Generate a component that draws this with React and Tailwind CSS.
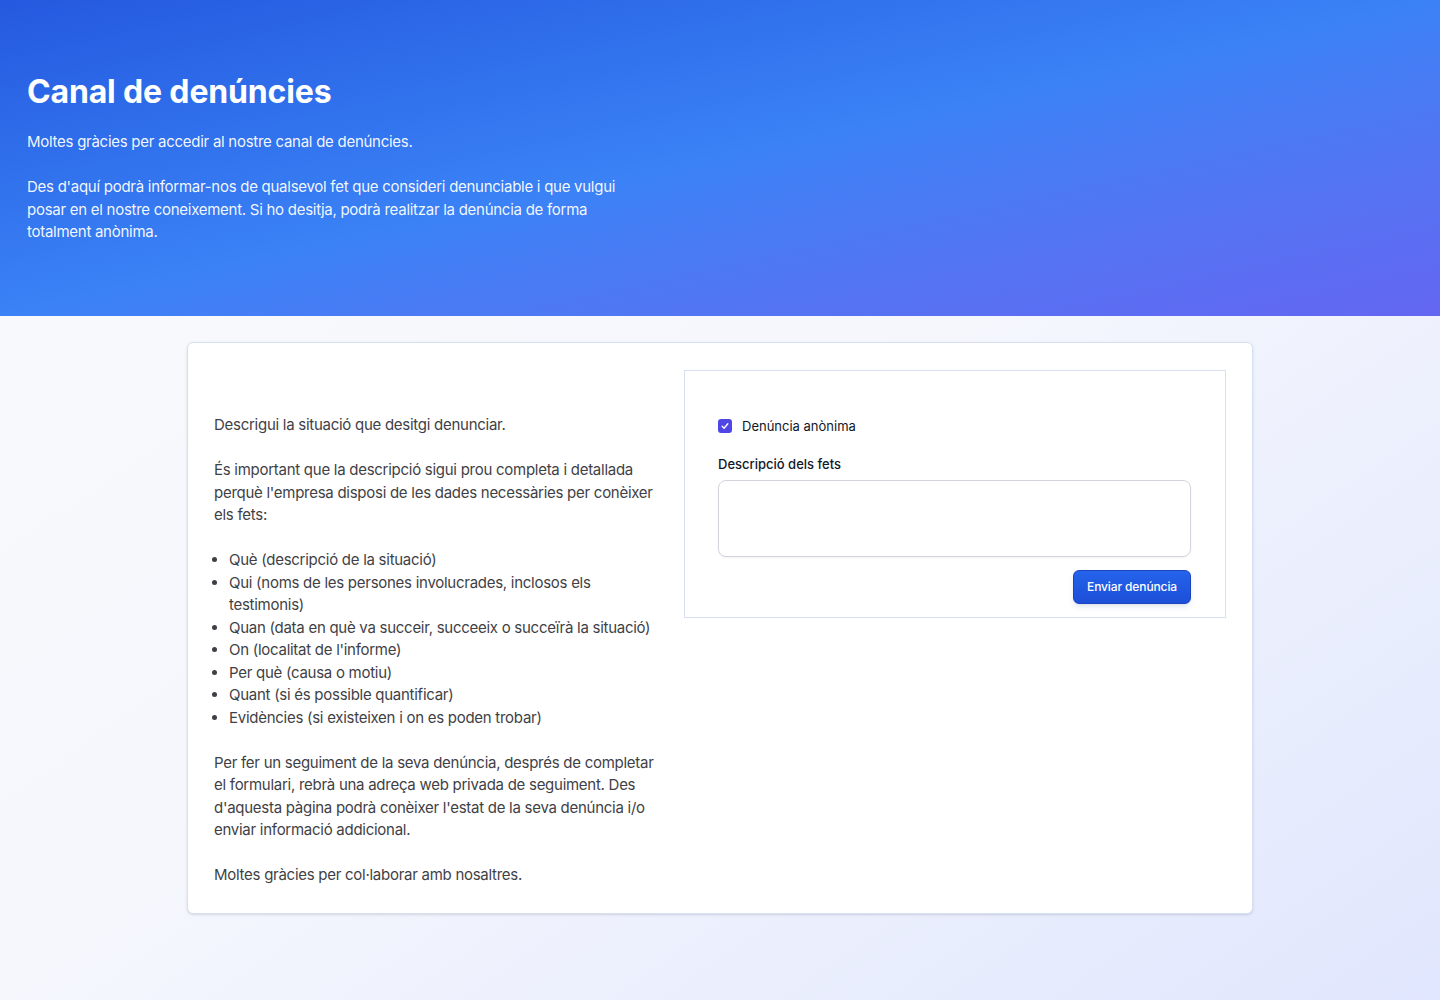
import { useState } from 'react';

const font = { fontFamily: 'Inter, "Noto Sans", "Liberation Sans", sans-serif' };

const items = [
  'Què (descripció de la situació)',
  'Qui (noms de les persones involucrades, inclosos els testimonis)',
  'Quan (data en què va succeir, succeeix o succeïrà la situació)',
  "On (localitat de l'informe)",
  'Per què (causa o motiu)',
  'Quant (si és possible quantificar)',
  'Evidències (si existeixen i on es poden trobar)',
];

function Checkbox({ checked, onChange }) {
  return (
    <button
      type="button"
      onClick={() => onChange(!checked)}
      className={`flex h-[14px] w-[14px] items-center justify-center rounded-[3px] ${
        checked ? 'bg-[#4f46e5]' : 'border border-gray-300 bg-white'
      }`}
    >
      {checked && (
        <svg viewBox="0 0 16 16" className="h-[10px] w-[10px]" fill="none">
          <path d="M3.5 8.5l3 3 6-7" stroke="white" strokeWidth="2.2" strokeLinecap="round" strokeLinejoin="round" />
        </svg>
      )}
    </button>
  );
}

export default function App() {
  const [anonymous, setAnonymous] = useState(true);
  const [text, setText] = useState('');

  return (
    <div style={font} className="min-h-[1000px] bg-gradient-to-br from-[#f8fafc] via-[#f5f7fd] to-[#e0e6fd]">
      {/* Header */}
      <header className="h-[316px] bg-gradient-to-br from-[#2559df] via-[#3b82f6] to-[#6366f1] px-[27px] pt-[72px] text-white">
        <h1 className="text-[32px] font-bold leading-10 tracking-[-0.005em]">Canal de denúncies</h1>
        <div className="mt-[19px] max-w-[600px] text-[15px] leading-[22.5px] tracking-[-0.018em] text-white/95">
          <p>Moltes gràcies per accedir al nostre canal de denúncies.</p>
          <p className="mt-[22.5px]">
            Des d'aquí podrà informar-nos de qualsevol fet que consideri denunciable i que vulgui posar en el
            nostre coneixement. Si ho desitja, podrà realitzar la denúncia de forma totalment anònima.
          </p>
        </div>
      </header>

      {/* Content */}
      <main className="flex justify-center pt-[26px] pb-[87px]">
        <div className="w-[1066px] rounded-md border border-[#d6e0f0] bg-white px-[26px] pt-[27px] pb-[26px] shadow-sm">
          <div className="grid grid-cols-[442px_1fr] gap-[28px]">
            <div className="pt-[44px] text-[15px] leading-[22.5px] tracking-[-0.018em] text-[#3f3f46]">
              <p>Descrigui la situació que desitgi denunciar.</p>
              <p className="mt-[22.5px]">
                És important que la descripció sigui prou completa i detallada perquè l'empresa disposi de les
                dades necessàries per conèixer els fets:
              </p>
              <ul className="mt-[22.5px] list-disc pl-[15px]">
                {items.map((item) => (
                  <li key={item}>{item}</li>
                ))}
              </ul>
              <p className="mt-[22.5px]">
                Per fer un seguiment de la seva denúncia, després de completar el formulari, rebrà una adreça web
                privada de seguiment. Des d'aquesta pàgina podrà conèixer l'estat de la seva denúncia i/o enviar
                informació addicional.
              </p>
              <p className="mt-[22.5px]">Moltes gràcies per col·laborar amb nosaltres.</p>
            </div>

            <div className="self-start border border-[#d6e0f0] bg-white pl-[33px] pr-[34px] pt-[47px] pb-[13px]">
              <label className="flex items-center gap-[10px] text-[13px] leading-4 text-gray-900">
                <Checkbox checked={anonymous} onChange={setAnonymous} />
                Denúncia anònima
              </label>

              <label className="mt-[22px] block text-[13px] font-medium leading-4 text-gray-900">
                Descripció dels fets
              </label>
              <textarea
                value={text}
                onChange={(e) => setText(e.target.value)}
                className="mt-[8px] block h-[77px] w-full resize-none rounded-lg border border-[#d1d5db] px-3 py-2 text-sm text-gray-900 shadow-xs outline-none focus:border-blue-500"
              />

              <div className="mt-[13px] flex justify-end">
                <button
                  type="button"
                  className="h-[34px] rounded-md border border-[#1d44c0] bg-gradient-to-b from-[#2563eb] to-[#1d4ed8] px-[13px] text-[12px] font-medium tracking-[-0.01em] text-white shadow-md shadow-blue-900/10"
                >
                  Enviar denúncia
                </button>
              </div>
            </div>
          </div>
        </div>
      </main>
    </div>
  );
}
